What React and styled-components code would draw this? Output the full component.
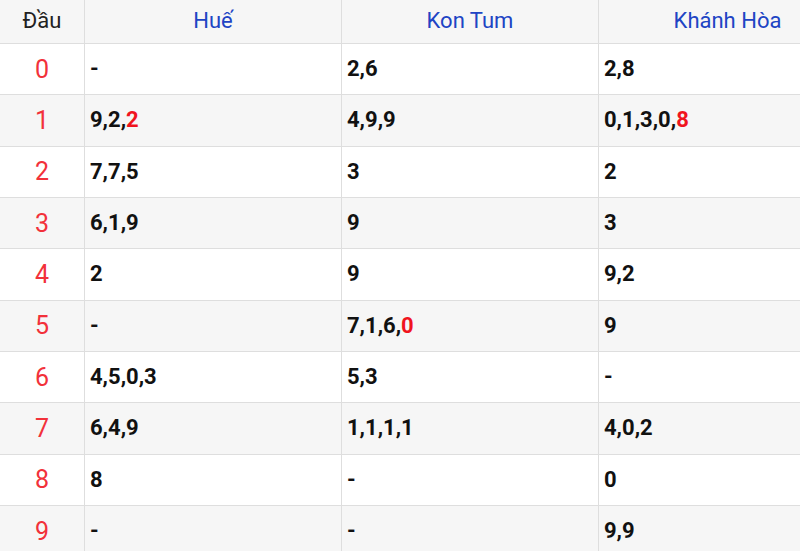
import styled, { createGlobalStyle } from "styled-components";

const GlobalStyle = createGlobalStyle`
  html, body {
    margin: 0;
    padding: 0;
    overflow: hidden;
    background: #fff;
  }
  body {
    font-family: Roboto, "Noto Sans", Arial, sans-serif;
  }
`;

const Table = styled.div`
  width: 857px;
  display: flex;
  flex-direction: column;
`;

const Row = styled.div`
  display: grid;
  grid-template-columns: 85px 257px 257px 258px;
  height: ${(p) => (p.$head ? "44px" : "51.33px")};
  box-sizing: border-box;
  border-bottom: 1px solid #dedede;
  background: ${(p) => (p.$shade ? "#f6f6f6" : "#ffffff")};
`;

const Cell = styled.div`
  display: flex;
  align-items: center;
  justify-content: ${(p) => (p.$center ? "center" : "flex-start")};
  padding: ${(p) => (p.$center ? "0" : "0 0 1px 5px")};
  box-sizing: border-box;
  border-right: 1px solid #dedede;
  font-size: 22px;
  font-weight: 700;
  color: #111;
`;

const HeadCell = styled(Cell)`
  font-weight: 400;
  font-size: 22px;
  padding-bottom: 2px;
  color: ${(p) => (p.$blue ? "#2044c4" : "#222")};
`;

const Dau = styled(Cell)`
  font-weight: 400;
  font-size: 25px;
  padding-bottom: 0;
  color: #f2313a;
`;

const Hit = styled.span`
  color: #f0141e;
`;

const regions = ["Huế", "Kon Tum", "Khánh Hòa"];

const data = [
  [["-"], ["2,6"], ["2,8"]],
  [["9,2,", "2"], ["4,9,9"], ["0,1,3,0,", "8"]],
  [["7,7,5"], ["3"], ["2"]],
  [["6,1,9"], ["9"], ["3"]],
  [["2"], ["9"], ["9,2"]],
  [["-"], ["7,1,6,", "0"], ["9"]],
  [["4,5,0,3"], ["5,3"], ["-"]],
  [["6,4,9"], ["1,1,1,1"], ["4,0,2"]],
  [["8"], ["-"], ["0"]],
  [["-"], ["-"], ["9,9"]],
];

export default function App() {
  return (
    <>
      <GlobalStyle />
      <Table>
        <Row $head $shade>
          <HeadCell $center>Đầu</HeadCell>
          {regions.map((r) => (
            <HeadCell key={r} $center $blue>
              {r}
            </HeadCell>
          ))}
        </Row>
        {data.map((row, i) => (
          <Row key={i} $shade={i % 2 === 1}>
            <Dau $center>{i}</Dau>
            {row.map(([plain, hit], j) => (
              <Cell key={j}>
                {plain}
                {hit && <Hit>{hit}</Hit>}
              </Cell>
            ))}
          </Row>
        ))}
      </Table>
    </>
  );
}
